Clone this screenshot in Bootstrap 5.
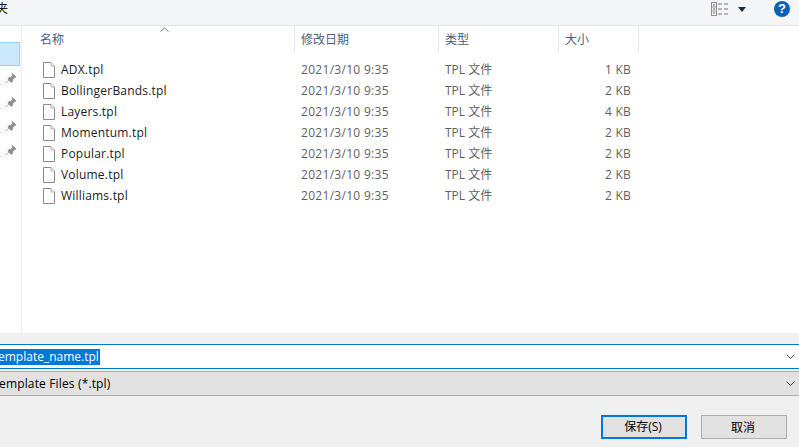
<!DOCTYPE html>
<html lang="zh">
<head>
<meta charset="utf-8">
<title>Save template</title>
<link rel="stylesheet" href="https://cdn.jsdelivr.net/npm/bootstrap@5.3.0/dist/css/bootstrap.min.css">
<style>
html,body{width:799px;height:447px;overflow:hidden;background:#fff}
body{font-family:"Open Sans","Noto Sans CJK SC",sans-serif;font-size:12px;line-height:21px;color:#1b1b1b}
.dlg{width:799px;height:447px}
.topbar{height:26px;background:#f4f5f7;border-bottom:1px solid #e4e5e7;padding:0 9px 7px 0}
.cut-title{margin-left:-4px;font-size:12px;line-height:18px}
.viewicon{margin-right:10px}
.caretdown{width:0;height:0;border-left:4.5px solid transparent;border-right:4.5px solid transparent;border-top:5px solid #1b2a4a;margin-right:28px}
.helpdot{width:16px;height:16px;border-radius:50%;background:#0a62b8;color:#fff;font:bold 13px/16px "Liberation Sans",sans-serif;text-align:center}
.mainarea{height:307px}
.sidepane{width:22px;border-right:1px solid #eceef0;padding-top:16px}
.sel-item{width:20px;height:24px;background:#cce8ff;border:1px solid #99d1ff;border-left:0}
.pinslot{height:24px;padding-left:5px}
.listpane{width:777px}
.headrow{height:28px;color:#4c607a;line-height:28px}
.hc{height:27px;border-right:1px solid #e5e5e5;padding-left:6px;position:relative}
.c-name{width:273px;padding-left:18px}
.c-date{width:144px}
.c-type{width:120px}
.c-size{width:80px}
.sortcaret{position:absolute;left:138px;top:1px;display:block}
.filelist{padding-top:5px}
.frow{height:21px}
.cell-name{width:273px;padding-left:21px;color:#1b1b1b;letter-spacing:.2px}
.cell-name svg{margin-right:6px;flex:none}
.cell-date{width:144px;padding-left:6px;color:#5f5f5f;letter-spacing:.3px}
.cell-type{width:120px;padding-left:6px;color:#5f5f5f}
.cell-size{width:72px;text-align:right;color:#5f5f5f;letter-spacing:.2px}
.bottompane{height:114px;background:#f0f0f0;padding-top:11px}
.fnbox.form-control{height:25px;border:0;border-top:1px solid #0078d7;border-bottom:1px solid #0078d7;border-radius:0;background:#fff;padding:0 4px 0 0;font-size:12px;color:#000}
.fnsel{background:#0078d7;color:#fff;line-height:16px;margin-left:-2px;padding-right:1px}
.ftbox{height:25px;margin-top:2px;background:#e1e1e1;border-top:1px solid #adadad;border-bottom:1px solid #adadad;padding:0 4px 0 0;line-height:21px;color:#000}
.ftlabel{margin-left:-1px;letter-spacing:.15px}
.btnrow{margin-top:19px;padding-right:12px;gap:14px}
.btn.dlgbtn{width:86px;height:24px;padding:0 2px 0 0;border-radius:0;background:#e1e1e1;border:1px solid #adadad;color:#000;font-size:12px;line-height:21px}
.btn.dlgbtn.primaryb{border:2px solid #0078d7;line-height:20px}
</style>
</head>
<body>
<div class="dlg d-flex flex-column">
  <div class="topbar d-flex align-items-center">
    <span class="cut-title flex-grow-1 overflow-hidden">夹</span>
    <svg class="viewicon" width="17" height="14" viewBox="0 0 17 14"><rect x=".5" y=".5" width="5" height="13" fill="#fff" stroke="#8f8f8f"/><path d="M0 5h6M0 9h6" stroke="#8f8f8f"/><path d="M2 3h2M2 7h2" stroke="#555"/><path d="M2 11h2" stroke="#c0392b"/><path d="M7 2h4M13 2h4M7 7h4M13 7h4M7 12h4M13 12h4" stroke="#777"/></svg>
    <span class="caretdown"></span>
    <span class="helpdot">?</span>
  </div>
  <div class="mainarea d-flex">
    <div class="sidepane flex-shrink-0">
      <div class="sel-item"></div>
      <div class="pinslot"><svg width="12" height="12" viewBox="0 0 12 12"><path d="M7 1l4 4-1.300 .5-2 2.200-.3 2-1.200.8L2.900 6.800l1-1.100 2-.3 1.900-2.200z M4 8l-3 3" fill="#8b8f94" stroke="#8b8f94" stroke-width=".8"/></svg></div>
      <div class="pinslot"><svg width="12" height="12" viewBox="0 0 12 12"><path d="M7 1l4 4-1.300 .5-2 2.200-.3 2-1.200.8L2.900 6.800l1-1.100 2-.3 1.900-2.200z M4 8l-3 3" fill="#8b8f94" stroke="#8b8f94" stroke-width=".8"/></svg></div>
      <div class="pinslot"><svg width="12" height="12" viewBox="0 0 12 12"><path d="M7 1l4 4-1.300 .5-2 2.200-.3 2-1.200.8L2.900 6.800l1-1.100 2-.3 1.900-2.200z M4 8l-3 3" fill="#8b8f94" stroke="#8b8f94" stroke-width=".8"/></svg></div>
      <div class="pinslot"><svg width="12" height="12" viewBox="0 0 12 12"><path d="M7 1l4 4-1.300 .5-2 2.200-.3 2-1.200.8L2.900 6.800l1-1.100 2-.3 1.900-2.200z M4 8l-3 3" fill="#8b8f94" stroke="#8b8f94" stroke-width=".8"/></svg></div>
    </div>
    <div class="listpane">
      <div class="headrow d-flex">
        <div class="hc c-name">名称<svg class="sortcaret" width="9" height="5" viewBox="0 0 9 5"><path d="M.5 4.500l4-3.500 4 3.500" fill="none" stroke="#7a7a7a"/></svg></div>
        <div class="hc c-date">修改日期</div>
        <div class="hc c-type">类型</div>
        <div class="hc c-size">大小</div>
      </div>
      <div class="filelist">
        <div class="frow d-flex"><div class="cell-name d-flex align-items-center"><svg width="12" height="16" viewBox="0 0 12 16"><path d="M.5.500h7.500l3.500 3.500v11.500h-11z" fill="#fff" stroke="#8a8a8a"/><path d="M8 .5v3.500h3.500" fill="#f2f2f2" stroke="#b5b5b5"/></svg>ADX.tpl</div><div class="cell-date">2021/3/10 9:35</div><div class="cell-type">TPL 文件</div><div class="cell-size">1 KB</div></div>
        <div class="frow d-flex"><div class="cell-name d-flex align-items-center"><svg width="12" height="16" viewBox="0 0 12 16"><path d="M.5.500h7.500l3.500 3.500v11.500h-11z" fill="#fff" stroke="#8a8a8a"/><path d="M8 .5v3.500h3.500" fill="#f2f2f2" stroke="#b5b5b5"/></svg>BollingerBands.tpl</div><div class="cell-date">2021/3/10 9:35</div><div class="cell-type">TPL 文件</div><div class="cell-size">2 KB</div></div>
        <div class="frow d-flex"><div class="cell-name d-flex align-items-center"><svg width="12" height="16" viewBox="0 0 12 16"><path d="M.5.500h7.500l3.500 3.500v11.500h-11z" fill="#fff" stroke="#8a8a8a"/><path d="M8 .5v3.500h3.500" fill="#f2f2f2" stroke="#b5b5b5"/></svg>Layers.tpl</div><div class="cell-date">2021/3/10 9:35</div><div class="cell-type">TPL 文件</div><div class="cell-size">4 KB</div></div>
        <div class="frow d-flex"><div class="cell-name d-flex align-items-center"><svg width="12" height="16" viewBox="0 0 12 16"><path d="M.5.500h7.500l3.500 3.500v11.500h-11z" fill="#fff" stroke="#8a8a8a"/><path d="M8 .5v3.500h3.500" fill="#f2f2f2" stroke="#b5b5b5"/></svg>Momentum.tpl</div><div class="cell-date">2021/3/10 9:35</div><div class="cell-type">TPL 文件</div><div class="cell-size">2 KB</div></div>
        <div class="frow d-flex"><div class="cell-name d-flex align-items-center"><svg width="12" height="16" viewBox="0 0 12 16"><path d="M.5.500h7.500l3.500 3.500v11.500h-11z" fill="#fff" stroke="#8a8a8a"/><path d="M8 .5v3.500h3.500" fill="#f2f2f2" stroke="#b5b5b5"/></svg>Popular.tpl</div><div class="cell-date">2021/3/10 9:35</div><div class="cell-type">TPL 文件</div><div class="cell-size">2 KB</div></div>
        <div class="frow d-flex"><div class="cell-name d-flex align-items-center"><svg width="12" height="16" viewBox="0 0 12 16"><path d="M.5.500h7.500l3.500 3.500v11.500h-11z" fill="#fff" stroke="#8a8a8a"/><path d="M8 .5v3.500h3.500" fill="#f2f2f2" stroke="#b5b5b5"/></svg>Volume.tpl</div><div class="cell-date">2021/3/10 9:35</div><div class="cell-type">TPL 文件</div><div class="cell-size">2 KB</div></div>
        <div class="frow d-flex"><div class="cell-name d-flex align-items-center"><svg width="12" height="16" viewBox="0 0 12 16"><path d="M.5.500h7.500l3.500 3.500v11.500h-11z" fill="#fff" stroke="#8a8a8a"/><path d="M8 .5v3.500h3.500" fill="#f2f2f2" stroke="#b5b5b5"/></svg>Williams.tpl</div><div class="cell-date">2021/3/10 9:35</div><div class="cell-type">TPL 文件</div><div class="cell-size">2 KB</div></div>
      </div>
    </div>
  </div>
  <div class="bottompane">
    <div class="fnbox form-control d-flex justify-content-between align-items-center">
      <span class="fnsel d-inline-block">emplate_name.tpl</span>
      <svg width="9" height="6" viewBox="0 0 9 6"><path d="M.5.500l4 4 4-4" fill="none" stroke="#555"/></svg>
    </div>
    <div class="ftbox d-flex justify-content-between align-items-center">
      <span class="ftlabel">emplate Files (*.tpl)</span>
      <svg width="9" height="6" viewBox="0 0 9 6"><path d="M.5.500l4 4 4-4" fill="none" stroke="#555"/></svg>
    </div>
    <div class="btnrow d-flex justify-content-end">
      <button type="button" class="btn dlgbtn primaryb">保存(S)</button>
      <button type="button" class="btn dlgbtn">取消</button>
    </div>
  </div>
</div>
</body>
</html>
